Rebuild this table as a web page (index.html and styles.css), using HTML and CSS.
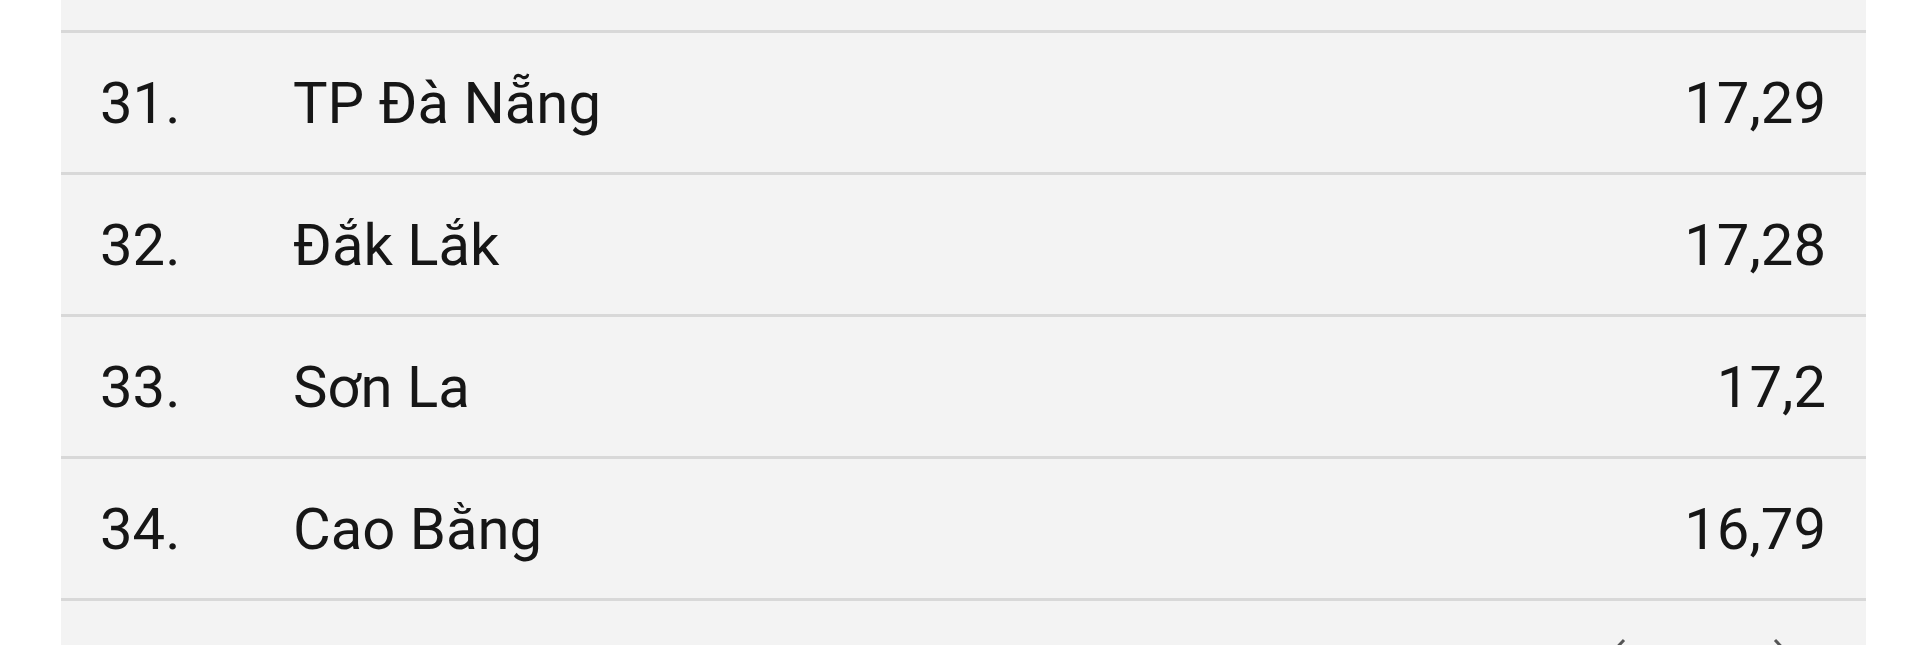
FILE: index.html
```html
<!DOCTYPE html>
<html lang="vi">
<head>
<meta charset="utf-8">
<title>Xếp hạng</title>
<link rel="stylesheet" href="styles.css">
</head>
<body>
<div class="panel">
  <div class="row-cut"></div>
  <div class="row">
    <span class="rank">31.</span>
    <span class="name">TP Đà Nẵng</span>
    <span class="value">17,29</span>
  </div>
  <div class="row">
    <span class="rank">32.</span>
    <span class="name">Đắk Lắk</span>
    <span class="value">17,28</span>
  </div>
  <div class="row">
    <span class="rank">33.</span>
    <span class="name">Sơn La</span>
    <span class="value">17,2</span>
  </div>
  <div class="row">
    <span class="rank">34.</span>
    <span class="name">Cao Bằng</span>
    <span class="value">16,79</span>
  </div>
  <div class="pager">
    <svg class="chev" viewBox="0 0 24 40" width="24" height="40"><path d="M21 2 L4 20 L21 38" fill="none" stroke="#555" stroke-width="3"/></svg>
    <svg class="chev" viewBox="0 0 24 40" width="24" height="40"><path d="M3 2 L20 20 L3 38" fill="none" stroke="#555" stroke-width="3"/></svg>
  </div>
</div>
</body>
</html>
```
FILE: styles.css
```css
html, body {
  margin: 0;
  padding: 0;
  background: #ffffff;
  overflow: hidden;
}
body {
  font-family: Roboto, "Liberation Sans", sans-serif;
  color: #161616;
}
.panel {
  margin-left: 61px;
  width: 1805px;
  background: #f3f3f3;
  height: 645px;
  overflow: hidden;
}
.row-cut {
  height: 30px;
}
.row {
  display: grid;
  grid-template-columns: 193px 1fr auto;
  align-items: center;
  height: 139px;
  border-top: 3px solid #d8d8d8;
  padding: 0 40px 0 39px;
  font-size: 58px;
  line-height: 1;
}
.value {
  text-align: right;
}
.pager {
  border-top: 3px solid #d8d8d8;
  display: flex;
  justify-content: flex-end;
  gap: 145px;
  padding: 37px 70px 0 0;
}
.chev {
  display: block;
}
```
